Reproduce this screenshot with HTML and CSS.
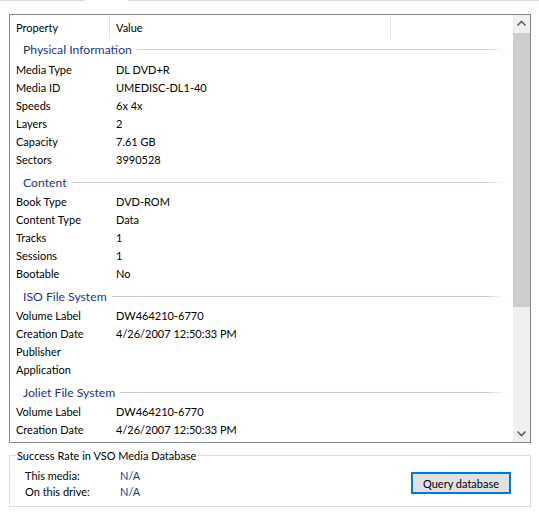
FILE: index.html
```html
<!DOCTYPE html>
<html>
<head>
<meta charset="utf-8">
<link rel="stylesheet" href="styles.css">
</head>
<body>
<div class="topstrip">
  <div class="tabline tabline-left"></div>
  <div class="tabgap"></div>
  <div class="tabline tabline-right"></div>
</div>
<div class="listbox">
  <div class="listcontent">
    <div class="header">
      <div class="hcol hcol-prop">Property</div>
      <div class="hcol hcol-val">Value</div>
      <div class="hcol hcol-rest"></div>
    </div>

    <div class="group group-first"><span class="gtitle">Physical Information</span><span class="gline"></span></div>
    <div class="row"><span class="k">Media Type</span><span class="v">DL DVD+R</span></div>
    <div class="row"><span class="k">Media ID</span><span class="v">UMEDISC-DL1-40</span></div>
    <div class="row"><span class="k">Speeds</span><span class="v">6x 4x</span></div>
    <div class="row"><span class="k">Layers</span><span class="v">2</span></div>
    <div class="row"><span class="k">Capacity</span><span class="v">7.61 GB</span></div>
    <div class="row"><span class="k">Sectors</span><span class="v">3990528</span></div>

    <div class="group"><span class="gtitle">Content</span><span class="gline"></span></div>
    <div class="row"><span class="k">Book Type</span><span class="v">DVD-ROM</span></div>
    <div class="row"><span class="k">Content Type</span><span class="v">Data</span></div>
    <div class="row"><span class="k">Tracks</span><span class="v">1</span></div>
    <div class="row"><span class="k">Sessions</span><span class="v">1</span></div>
    <div class="row"><span class="k">Bootable</span><span class="v">No</span></div>

    <div class="group"><span class="gtitle">ISO File System</span><span class="gline"></span></div>
    <div class="row"><span class="k">Volume Label</span><span class="v">DW464210-6770</span></div>
    <div class="row"><span class="k">Creation Date</span><span class="v">4/26/2007 12:50:33 PM</span></div>
    <div class="row"><span class="k">Publisher</span><span class="v"></span></div>
    <div class="row"><span class="k">Application</span><span class="v"></span></div>

    <div class="group"><span class="gtitle">Joliet File System</span><span class="gline"></span></div>
    <div class="row"><span class="k">Volume Label</span><span class="v">DW464210-6770</span></div>
    <div class="row"><span class="k">Creation Date</span><span class="v">4/26/2007 12:50:33 PM</span></div>
  </div>
  <div class="scrollbar">
    <div class="sbtn">
      <svg width="17" height="17" viewBox="0 0 17 17"><path d="M4.5 10.5 L8.5 6.5 L12.5 10.5" fill="none" stroke="#606060" stroke-width="1.6"/></svg>
    </div>
    <div class="strack">
      <div class="sthumb"></div>
    </div>
    <div class="sbtn">
      <svg width="17" height="17" viewBox="0 0 17 17"><path d="M4.5 6.5 L8.5 10.5 L12.5 6.5" fill="none" stroke="#606060" stroke-width="1.6"/></svg>
    </div>
  </div>
</div>

<div class="gbox">
  <div class="gbox-head">
    <span class="gbox-title">Success Rate in VSO Media Database</span>
  </div>
  <div class="gbox-body">
    <div class="stats">
      <div class="srow"><span class="sk">This media:</span><span class="sv">N/A</span></div>
      <div class="srow"><span class="sk">On this drive:</span><span class="sv">N/A</span></div>
    </div>
    <button class="qbtn">Query database</button>
  </div>
</div>
</body>
</html>
```

FILE: styles.css
```css
html, body {
  margin: 0;
  padding: 0;
  background: #ffffff;
}
body {
  width: 539px;
  height: 516px;
  overflow: hidden;
  font-family: "Segoe UI", Lato, "Noto Sans", sans-serif;
  font-size: 11px;
  color: #000000;
}
.topstrip {
  display: flex;
  height: 14px;
}
.tabline {
  height: 1px;
  background: #dadada;
}
.tabline-left { width: 85px; }
.tabgap { width: 43px; }
.tabline-right { flex: 1; }

.listbox {
  margin-left: 9px;
  width: 520px;
  height: 427px;
  border: 1px solid #828790;
  display: flex;
  background: #ffffff;
}
.listcontent {
  flex: 1;
  overflow: hidden;
}
.header {
  display: flex;
  height: 22px;
  align-items: stretch;
}
.hcol {
  display: flex;
  align-items: center;
  padding-left: 6px;
  box-sizing: border-box;
  border-right: 1px solid #e5e5e5;
  margin: 1px 0 -2px 0;
}
.hcol-prop { width: 100px; }
.hcol-val { width: 281px; }
.hcol-rest { flex: 1; border-right: none; }

.group {
  display: flex;
  align-items: center;
  height: 24px;
  box-sizing: border-box;
  padding: 2px 8px 0 13px;
}
.group-first {
  padding-top: 0;
}
.gtitle {
  color: #1e3287;
  font-size: 12.2px;
  padding-right: 5px;
  white-space: nowrap;
}
.gline {
  flex: 1;
  height: 1px;
  background: linear-gradient(to right, #c3cfdc 0%, #c3cfdc 95%, #ffffff 100%);
  margin-top: 1px;
}
.row {
  display: flex;
  align-items: center;
  height: 18px;
  box-sizing: border-box;
  padding-bottom: 1px;
  white-space: nowrap;
}
.k {
  width: 100px;
  padding-left: 6px;
}
.v {
  flex: 1;
}

.scrollbar {
  width: 17px;
  display: flex;
  flex-direction: column;
  background: #f0f0f0;
}
.sbtn {
  height: 17px;
  display: flex;
  align-items: center;
  justify-content: center;
}
.strack {
  flex: 1;
  padding-top: 1px;
}
.sthumb {
  height: 274px;
  background: #cdcdcd;
}

.gbox {
  margin: 5px 0 0 9px;
  width: 522px;
}
.gbox-head {
  display: flex;
  height: 16px;
}
.gbox-head::before,
.gbox-head::after {
  content: "";
  align-self: flex-end;
  height: 8px;
  border-top: 1px solid #dcdcdc;
}
.gbox-head::before {
  width: 6px;
  border-left: 1px solid #dcdcdc;
}
.gbox-head::after {
  flex: 1;
  border-right: 1px solid #dcdcdc;
}
.gbox-title {
  padding: 0 1px;
  line-height: 16px;
  white-space: nowrap;
}
.gbox-body {
  height: 43px;
  box-sizing: border-box;
  border: 1px solid #dcdcdc;
  border-top: none;
  display: flex;
  align-items: flex-start;
  justify-content: space-between;
  padding: 3px 19px 0 15px;
}
.stats {
  display: flex;
  flex-direction: column;
}
.srow {
  display: flex;
  height: 16px;
  align-items: center;
}
.sk {
  width: 95px;
}
.sv {
  color: #1e3287;
}
.qbtn {
  width: 100px;
  height: 22px;
  margin-top: 5px;
  font-family: inherit;
  font-size: 11px;
  background: #e1e1e1;
  border: 2px solid #0078d7;
  padding: 0;
  color: #000000;
}
```
